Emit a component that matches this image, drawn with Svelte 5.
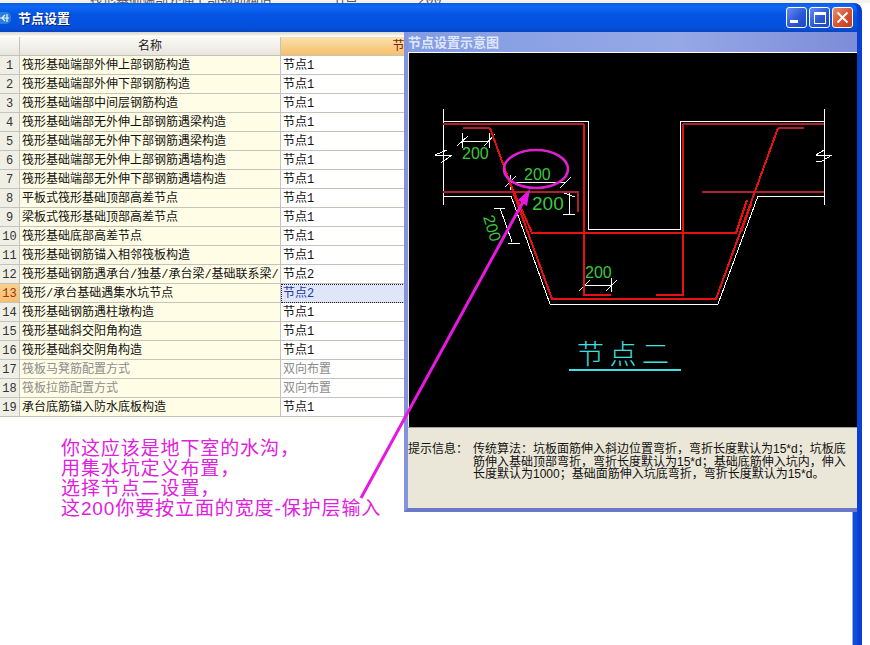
<script lang="ts">
  // 节点设置 dialog with the child preview window and the red-ink annotation on top
  const rows = [
    ['筏形基础端部外伸上部钢筋构造', '节点1'],
    ['筏形基础端部外伸下部钢筋构造', '节点1'],
    ['筏形基础端部中间层钢筋构造', '节点1'],
    ['筏形基础端部无外伸上部钢筋遇梁构造', '节点1'],
    ['筏形基础端部无外伸下部钢筋遇梁构造', '节点1'],
    ['筏形基础端部无外伸上部钢筋遇墙构造', '节点1'],
    ['筏形基础端部无外伸下部钢筋遇墙构造', '节点1'],
    ['平板式筏形基础顶部高差节点', '节点1'],
    ['梁板式筏形基础顶部高差节点', '节点1'],
    ['筏形基础底部高差节点', '节点1'],
    ['筏形基础钢筋锚入相邻筏板构造', '节点1'],
    ['筏形基础钢筋遇承台/独基/承台梁/基础联系梁/', '节点2'],
    ['筏形/承台基础遇集水坑节点', '节点2'],
    ['筏形基础钢筋遇柱墩构造', '节点1'],
    ['筏形基础斜交阳角构造', '节点1'],
    ['筏形基础斜交阴角构造', '节点1'],
    ['筏板马凳筋配置方式', '双向布置'],
    ['筏板拉筋配置方式', '双向布置'],
    ['承台底筋锚入防水底板构造', '节点1']
  ]
  const selected = 12
  const disabled = [16, 17]

  const info = [
    '传统算法：坑板面筋伸入斜边位置弯折，弯折长度默认为15*d；坑板底',
    '筋伸入基础顶部弯折，弯折长度默认为15*d；基础底筋伸入坑内，伸入',
    '长度默认为1000；基础面筋伸入坑底弯折，弯折长度默认为15*d。'
  ]
  const notes = ['你这应该是地下室的水沟，', '用集水坑定义布置，', '选择节点二设置，', '这200你要按立面的宽度-保护层输入']

  // drawing data, in page coordinates (the svg viewBox is shifted to the canvas corner)
  const white = [
    'M443 109V205',
    'M443 121H588V229H680V121H824',
    'M824 109V205',
    'M443 196H511L550 304H718L758 196H824'
  ]
  const darkRed = [
    'M443 124H584',
    'M463 128H490',
    'M443 192H578V212',
    'M702 192H824',
    'M683 124H824',
    'M778 128H804'
  ]
  const red = [
    'M584 124V295H611',
    'M490 128L552 299H716L778 128',
    'M683 124V295H656',
    'M510 183L532 233H736L747 200',
    'M741 232L751 204'
  ]
  const dims = [
    'M462 141H489M462 133V148M489 133V148M457 146L468 136M484 146L495 134',
    'M510 182H565M510 175V190M505 187L516 176M560 188L571 177',
    'M569 192V214M563 214H575M561 192L575 197',
    'M500 208L512 242M494 208H505M508 243H520',
    'M584 285H611M584 278V292M611 278V292M579 291L590 280M606 291L617 280',
    'M435 155H452L441 163M447 150L435 155',
    'M816 155H832L822 161H816M816 155L824 150'
  ]
</script>

<div class="desktop">
  <div class="behind">
    <span>筏形基础端部外伸上部钢筋构造</span>
    <span>节点</span>
    <span>200</span>
  </div>

  <div class="dialog">
    <header class="titlebar">
      <svg class="app-icon" width="12" height="14" viewBox="0 0 12 14">
        <rect x="-4" y="1" width="15" height="12" rx="5" fill="#2a7fd8" />
        <path d="M0 7H9M5 4L2 7L5 10M7 3V11" fill="none" stroke="#e8f4ff" stroke-width="1.2" />
      </svg>
      <span class="title">节点设置</span>
      <div class="buttons">
        <button class="btn" aria-label="minimize"><i class="min"></i></button>
        <button class="btn" aria-label="maximize"><i class="max"></i></button>
        <button class="btn close" aria-label="close">
          <svg width="13" height="13" viewBox="0 0 13 13">
            <path d="M1.5 1.5L11.5 11.5M11.5 1.5L1.5 11.5" stroke="#fff" stroke-width="2" />
          </svg>
        </button>
      </div>
    </header>

    <div class="client">
      <div class="grid">
        <div class="corner"></div>
        <div class="head">名称</div>
        <div class="head active">节点设置</div>
        {#each rows as row, i (i)}
          <div class="num" class:sel={i === selected}>{i + 1}</div>
          <div class="name" class:off={disabled.includes(i)}>{row[0]}</div>
          <div class="value" class:off={disabled.includes(i)} class:sel={i === selected}>{row[1]}</div>
        {/each}
      </div>
    </div>
  </div>

  <section class="preview">
    <div class="preview-title">节点设置示意图</div>
    <svg class="canvas" width="448" height="374" viewBox="409 53 448 374">
      <g fill="none" stroke="#fff" stroke-width="1" shape-rendering="crispEdges">
        {#each dims as d}<path {d} />{/each}
        {#each white as d}<path {d} />{/each}
      </g>
      <g fill="none" stroke="#b02028" stroke-width="2" shape-rendering="crispEdges">
        {#each darkRed as d}<path {d} />{/each}
      </g>
      <g fill="none" stroke="#e81010" stroke-width="2" shape-rendering="crispEdges">
        {#each red as d}<path {d} />{/each}
      </g>
      <g class="green">
        <text x="462" y="159" font-size="16">200</text>
        <text x="524" y="180" font-size="16">200</text>
        <text x="532" y="210" font-size="19">200</text>
        <text x="585" y="278" font-size="16">200</text>
        <text x="0" y="0" font-size="16" transform="translate(483 217) rotate(73)">200</text>
      </g>
      <text class="node-label" x="577" y="364">节点二</text>
      <path d="M569 370H681" stroke="#40e0e0" stroke-width="2" />
    </svg>
    <div class="info">
      <div class="info-label">提示信息：</div>
      <div class="info-text">
        {#each info as line}<div>{line}</div>{/each}
      </div>
    </div>
  </section>

  <!-- the annotation was painted over the screenshot, so it crosses both windows -->
  <svg class="ink" width="870" height="645" viewBox="0 0 870 645">
    <ellipse cx="536" cy="169" rx="32" ry="19" fill="none" stroke="#e020d0" stroke-width="2.6" />
    <path d="M361 498L524 200" stroke="#e818e0" stroke-width="3" />
    <path d="M530 189L518 200L527 206Z" fill="#e818e0" />
  </svg>
  <div class="notes">
    {#each notes as note}<div>{note}</div>{/each}
  </div>
</div>

<style>
  :global(body) {
    margin: 0;
    background: #fff;
  }
  .desktop {
    position: relative;
    width: 870px;
    height: 645px;
    overflow: hidden;
    background: #fff;
    font-family: 'Liberation Mono', 'Noto Sans CJK SC', monospace;
    font-size: 12px;
    color: #111;
  }
  .behind {
    display: flex;
    gap: 60px;
    height: 3px;
    padding-left: 90px;
    overflow: hidden;
    background: #f4f2ea;
    line-height: 1px;
    font-size: 13px;
    color: #555;
  }
  .dialog {
    display: flex;
    flex-direction: column;
    width: 862px;
    height: 642px;
    box-sizing: border-box;
    border-right: 5px solid #0a3fd0;
    border-top-right-radius: 8px;
    background: #0a50e0;
  }
  .titlebar {
    display: flex;
    align-items: center;
    flex: none;
    height: 29px;
    border-top-right-radius: 7px;
    background: linear-gradient(180deg, #0a5ae8 0%, #0e68f4 12%, #0554e4 40%, #0350dc 85%, #0a44c0 100%);
    color: #fff;
  }
  .app-icon {
    flex: none;
  }
  .title {
    margin-left: 6px;
    font-size: 13px;
    font-weight: 700;
    text-shadow: 1px 1px 0 #0a2a80;
  }
  .buttons {
    display: flex;
    gap: 2px;
    margin-left: auto;
    margin-right: 4px;
  }
  .btn {
    display: grid;
    place-items: center;
    width: 21px;
    height: 21px;
    padding: 0;
    box-sizing: border-box;
    border: 1px solid #fff;
    border-radius: 3px;
    background: linear-gradient(135deg, #6a8cf0 0%, #2a58d8 55%, #1e46c0 100%);
  }
  .btn.close {
    background: linear-gradient(135deg, #e8906c 0%, #d8502c 55%, #c03c1c 100%);
  }
  .min {
    display: block;
    width: 8px;
    height: 3px;
    margin: 8px 5px 0 0;
    background: #fff;
  }
  .max {
    display: block;
    width: 10px;
    height: 8px;
    border: 1px solid #fff;
    border-top-width: 3px;
  }
  .client {
    flex: 1;
    min-height: 0;
    box-sizing: border-box;
    padding-top: 5px;
    background: linear-gradient(180deg, #d8d6ca 0, #f0efe6 3px, #fff 4px);
    border-right: 1px solid #a8acc0;
    margin-right: 4px;
    overflow: hidden;
  }
  .grid {
    display: grid;
    grid-template-columns: 20px 261px 272px;
    grid-auto-rows: 19px;
    width: 553px;
    line-height: 21px;
  }
  .grid > div {
    box-sizing: border-box;
    border-right: 1px solid #c4c4bc;
    border-bottom: 1px solid #c4c4bc;
    white-space: nowrap;
    overflow: hidden;
  }
  .corner,
  .head {
    background: linear-gradient(180deg, #fbfaf6, #e8e6dc);
  }
  .head {
    text-align: center;
    color: #222;
  }
  .head.active {
    background: linear-gradient(180deg, #fbe0ae, #f6c06c);
    color: #802010;
  }
  .num {
    text-align: center;
    background: #f0efe6;
    color: #333;
  }
  .num.sel {
    background: linear-gradient(180deg, #fbd08c, #f8c070);
    color: #a03010;
  }
  .name {
    padding-left: 2px;
    background: #fffde6;
  }
  .value {
    padding-left: 2px;
    background: #fff;
  }
  .off {
    color: #8c8c8c;
  }
  .grid > .value.sel {
    background: #dee6f8;
    color: #2434a8;
    outline: 1px dotted #223;
    outline-offset: -1px;
  }
  .preview {
    position: absolute;
    left: 404px;
    top: 32px;
    display: flex;
    flex-direction: column;
    width: 453px;
    height: 480px;
    box-sizing: border-box;
    border-left: 4px solid #8494dc;
    border-bottom: 4px solid #6a78c8;
    background: #ebe7d8;
  }
  .preview-title {
    flex: none;
    height: 21px;
    overflow: hidden;
    line-height: 23px;
    background: linear-gradient(90deg, #829ce2, #96a8e6 60%, #7c8cd8);
    border-bottom: 1px solid #fff;
    box-sizing: border-box;
    color: #dfe6fb;
    font-size: 13px;
    font-weight: 700;
  }
  .canvas {
    display: block;
    flex: none;
    margin-left: 1px;
    background: #000;
  }
  .green text {
    fill: #3cc83c;
    font-family: 'Liberation Sans', sans-serif;
  }
  .node-label {
    fill: #40e0e0;
    font-family: 'Noto Sans CJK SC', sans-serif;
    font-size: 27px;
    font-weight: 300;
    letter-spacing: 5.5px;
  }
  .info {
    display: flex;
    flex: 1;
    padding-top: 15px;
    border-top: 1px solid #a0a094;
    font-family: 'Liberation Sans', 'Noto Sans CJK SC', sans-serif;
    line-height: 12.5px;
    white-space: nowrap;
  }
  .info-label {
    width: 65px;
  }
  .ink {
    position: absolute;
    left: 0;
    top: 0;
    pointer-events: none;
  }
  .notes {
    position: absolute;
    left: 61px;
    top: 439px;
    font-family: 'Liberation Sans', 'Noto Sans CJK SC', sans-serif;
    font-size: 19px;
    letter-spacing: 0.9px;
    line-height: 20px;
    color: #e020e0;
    white-space: nowrap;
  }
</style>
